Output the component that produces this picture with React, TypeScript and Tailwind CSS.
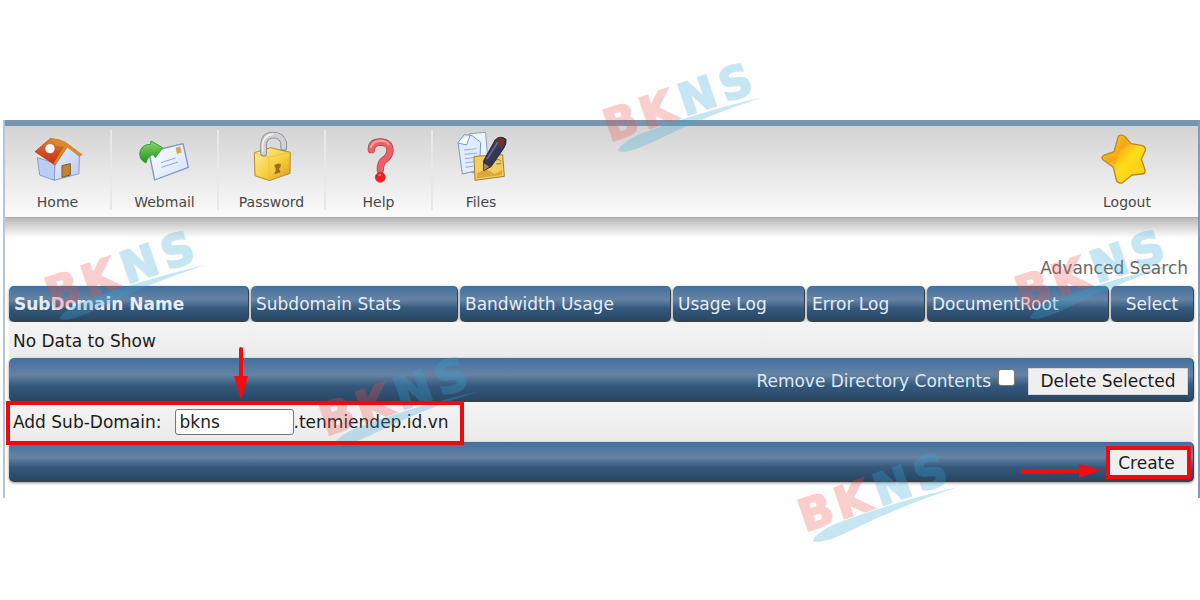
import type { FormEvent, ReactNode } from 'react';

function HomeIcon() {
  return (
    <svg viewBox="99 45 156 168" className="h-14 w-[52px] overflow-visible" aria-hidden="true">
      <defs>
        <linearGradient id="roof" x1="0" y1="0" x2="0" y2="1">
          <stop offset="0" stopColor="#e08a28" />
          <stop offset="0.5" stopColor="#d4501c" />
          <stop offset="1" stopColor="#c43016" />
        </linearGradient>
        <linearGradient id="wall" x1="0" y1="0" x2="1" y2="1">
          <stop offset="0" stopColor="#e8f0ff" />
          <stop offset="1" stopColor="#b8ccf4" />
        </linearGradient>
      </defs>
      <path d="M115 128 L122 180 L166 196 L168 145Z" fill="#b9cdf5" stroke="#8c9dc4" strokeWidth="3" />
      <path d="M166 196 L168 143 L204 90 L241 122 L240 176Z" fill="url(#wall)" stroke="#8c9dc4" strokeWidth="3" />
      <path d="M155 70 L108 110 L168 150 L205 94Z" fill="url(#roof)" stroke="#a43a1a" strokeWidth="2" />
      <path d="M155 70 Q180 72 200 82 L250 119 L241 124 L205 97 L168 150 L164 145 L196 92Z" fill="#d98a31" stroke="#a8672c" strokeWidth="1" />
      <path d="M155 70 Q180 72 200 82 L205 96 L170 92Z" fill="#d98a31" />
      <circle cx="153" cy="101" r="14" fill="#f4f7ff" />
      <path d="M189 152 L214 146 V180 L189 187Z" fill="#c08338" stroke="#85561f" strokeWidth="3" />
    </svg>
  );
}

function WebmailIcon() {
  return (
    <svg viewBox="417 45 156 168" className="h-14 w-[52px] overflow-visible" aria-hidden="true">
      <defs>
        <linearGradient id="paper" x1="0" y1="0" x2="1" y2="1">
          <stop offset="0" stopColor="#ffffff" />
          <stop offset="1" stopColor="#d2e1fa" />
        </linearGradient>
        <linearGradient id="arrow" x1="0" y1="0" x2="0" y2="1">
          <stop offset="0" stopColor="#8ada6a" />
          <stop offset="1" stopColor="#23901f" />
        </linearGradient>
      </defs>
      <path d="M447 111 L549 86 L565 157 L464 195Z" fill="url(#paper)" stroke="#7f95c4" strokeWidth="4" strokeLinejoin="round" />
      <path d="M527 98 L541 94 L545 113 L531 117Z" fill="#d8a65a" />
      <path d="M483 143 L527 129 M484 157 L534 141" stroke="#88a7dd" strokeWidth="3" />
      <path
        d="M453 78 L488 98 L466 128 L461 119 Q444 119 438 144 Q413 132 421 106 Q431 87 452 88Z"
        fill="url(#arrow)"
        stroke="#3a9c37"
        strokeWidth="3"
        strokeLinejoin="round"
      />
    </svg>
  );
}

function PasswordIcon() {
  return (
    <svg viewBox="90 45 156 168" className="h-14 w-[52px] overflow-visible" aria-hidden="true">
      <defs>
        <linearGradient id="brass" x1="0" y1="0" x2="1" y2="1">
          <stop offset="0" stopColor="#fff09a" />
          <stop offset="0.55" stopColor="#f6d040" />
          <stop offset="1" stopColor="#d99b24" />
        </linearGradient>
      </defs>
      <path d="M115 113 L163 98 L223 112 L222 175 L160 197 L117 182Z" fill="url(#brass)" stroke="#b58a2e" strokeWidth="3" strokeLinejoin="round" />
      <path d="M115 113 L159 127 L223 112 M159 127 L160 197" fill="none" stroke="#e6b93a" strokeWidth="2" />
      <path d="M143 115 V88 Q145 61 171 60 Q196 60 203 83 V98" fill="none" stroke="#84878c" strokeWidth="20" strokeLinecap="round" />
      <path d="M143 114 V88 Q145 61 171 60 Q196 60 203 83 V97" fill="none" stroke="#cfd1d4" strokeWidth="15" strokeLinecap="round" />
      <path d="M140 110 V88 Q143 62 171 57" fill="none" stroke="#f5f5f5" strokeWidth="4" />
      <path d="M175 151 Q185 142 194 147 V156 L189 161 L194 172 L175 178 L180 164Z" fill="#a2681e" />
    </svg>
  );
}

function HelpIcon() {
  return (
    <svg viewBox="411 45 156 168" className="h-14 w-[52px] overflow-visible" aria-hidden="true">
      <path d="M466 104 Q466 81 494 81 Q523 82 522 108 Q520 126 503 136 Q493 144 493 164" fill="none" stroke="#a94750" strokeWidth="22" strokeLinecap="round" />
      <path d="M466 104 Q466 81 494 81 Q523 82 522 108 Q520 126 503 136 Q493 144 493 164" fill="none" stroke="#ed6067" strokeWidth="18" strokeLinecap="round" />
      <path d="M464 97 Q470 78 494 77 Q510 77 518 88" fill="none" stroke="#f7a0a2" strokeWidth="6" strokeLinecap="round" />
      <circle cx="493" cy="187" r="15" fill="#f21c23" stroke="#ad3038" strokeWidth="2" />
      <circle cx="491" cy="180" r="4" fill="#fb7377" />
    </svg>
  );
}

function FilesIcon() {
  return (
    <svg viewBox="720 45 156 168" className="h-14 w-[52px] overflow-visible" aria-hidden="true">
      <path d="M764 56 L812 52 L820 160 L771 174Z" fill="#eef5ff" stroke="#86a3cd" strokeWidth="3" />
      <path d="M729 82 L748 59 L771 62 L797 82 L793 165 L742 177Z" fill="#e1edff" stroke="#7798c8" strokeWidth="3" />
      <path d="M729 84 L755 90 L766 59" fill="#ffffff" stroke="#7898c9" strokeWidth="3" />
      <path d="M747 105 L785 101 M749 118 L786 114 M750 131 L782 127 M751 144 L778 140 M752 157 L776 153" stroke="#8dafdf" strokeWidth="3" />
      <path d="M777 124 L863 119 L868 184 L780 196Z" fill="#f4ce62" stroke="#a87c30" strokeWidth="3" />
      <path d="M786 175 L813 162 L839 177 L861 165 V180 L785 190Z" fill="#dba939" />
      <path d="M838 139 Q847 128 858 138 M844 147 L859 145" fill="none" stroke="#8b9e42" strokeWidth="4" />
      <path d="M841 74 Q857 60 873 73 Q875 87 866 100 L828 155 L806 167 L806 137Z" fill="#343653" stroke="#242640" strokeWidth="3" />
      <path d="M846 72 Q860 65 870 76 L861 98 L837 86Z" fill="#6b3430" />
      <path d="M848 82 L816 132" stroke="#686c91" strokeWidth="5" />
      <path d="M807 145 L823 155 L806 167Z" fill="#ad854c" />
    </svg>
  );
}

function StarIcon() {
  return (
    <svg viewBox="363 60 156 168" className="h-14 w-[52px] overflow-visible" aria-hidden="true">
      <defs>
        <linearGradient id="gold" x1="0" y1="0" x2="1" y2="1">
          <stop offset="0" stopColor="#ffd11f" />
          <stop offset="0.35" stopColor="#f8ad17" />
          <stop offset="0.55" stopColor="#ffdc18" />
          <stop offset="1" stopColor="#fbc915" />
        </linearGradient>
      </defs>
      <path
        d="M415 79 Q424 71 435 80 L453 101 L488 107 Q499 111 495 124 L484 147 L495 180 Q497 192 486 192 L456 195 L429 217 Q418 223 410 213 L400 172 L371 151 Q361 143 371 136 L402 125Z"
        fill="url(#gold)"
        stroke="#bb8529"
        strokeWidth="4"
        strokeLinejoin="round"
      />
      <path d="M425 82 L412 127 L449 104Z" fill="#f6a51c" opacity="0.65" />
      <path d="M374 144 L414 139 L405 165Z" fill="#f39a17" opacity="0.45" />
    </svg>
  );
}

function NavItem({ label, children }: { label: string; children: ReactNode }) {
  return (
    <a href="#" className="flex flex-col items-center gap-2 text-sm leading-4 text-[#484848]">
      {children}
      <span>{label}</span>
    </a>
  );
}

const separated = 'w-[107px] border-r-2 border-[#e8e8e8]';

const navItems = [
  { label: 'Home', icon: <HomeIcon />, cell: separated },
  { label: 'Webmail', icon: <WebmailIcon />, cell: separated },
  { label: 'Password', icon: <PasswordIcon />, cell: separated },
  { label: 'Help', icon: <HelpIcon />, cell: separated },
  { label: 'Files', icon: <FilesIcon />, cell: 'w-24' },
];

const columns = [
  { label: 'SubDomain Name', width: 'w-[240px]', style: 'font-bold text-left' },
  { label: 'Subdomain Stats', width: 'w-[207px]', style: 'font-normal text-left' },
  { label: 'Bandwidth Usage', width: 'w-[211px]', style: 'font-normal text-left' },
  { label: 'Usage Log', width: 'w-[132px]', style: 'font-normal text-left' },
  { label: 'Error Log', width: 'w-[118px]', style: 'font-normal text-left' },
  { label: 'DocumentRoot', width: 'w-[182px]', style: 'font-normal text-left' },
  { label: 'Select', width: 'w-[83px]', style: 'font-normal text-center' },
];

const bar =
  'rounded-[5px] border-b-2 border-r border-b-[#36424e] border-r-[#36424e] bg-[linear-gradient(to_bottom,#40709f_0%,#6683a3_40%,#35597c_66%,#294765_100%)] shadow-[0_1px_3px_rgba(0,0,0,0.45)]';

const watermarks = [
  'left-[595px] top-[60px]',
  'left-[37px] top-[228px]',
  'left-[1007px] top-[227px]',
  'left-[311px] top-[354px]',
  'left-[790px] top-[450px]',
];

function Watermark({ place }: { place: string }) {
  return (
    <svg viewBox="0 0 180 100" className={`pointer-events-none absolute h-[100px] w-[180px] overflow-visible ${place}`} aria-hidden="true">
      <g opacity="0.28">
        <g transform="translate(15 82) rotate(-19)" fontFamily="DejaVu Sans, sans-serif" fontWeight="700" fontSize="44" strokeWidth="2">
          <text fill="#f0524f" stroke="#f0524f">
            B
          </text>
          <text x="38" fill="#f0524f" stroke="#f0524f">
            K
          </text>
          <text x="79" fill="#38a8d8" stroke="#38a8d8">
            N
          </text>
          <text x="122" fill="#38a8d8" stroke="#38a8d8">
            S
          </text>
        </g>
        <path d="M23 91 Q24 84 45 74 Q100 53 168 37 Q110 56 62 80 Q31 95 23 91Z" fill="#38a8d8" />
      </g>
    </svg>
  );
}

export default function App() {
  const submit = (event: FormEvent) => event.preventDefault();

  return (
    <div className="relative overflow-hidden bg-white py-[120px] font-['DejaVu_Sans',Verdana,sans-serif] text-[17px] leading-6 text-[#1c1c1c]">
      <main className="ml-[3px] border-l-2 border-r-2 border-l-[#b5c6d2] border-r-[#7f9db8] pb-4">
        <header className="flex h-[98px] items-start justify-between border-b border-t-[6px] border-b-[#aaaaaa] border-t-[#7796ae] bg-linear-to-b from-[#d3d3d3] to-[#fbfbfb] pr-[45px] pt-1">
          <nav className="flex">
            {navItems.map((item) => (
              <div key={item.label} className={`flex justify-center ${item.cell}`}>
                <NavItem label={item.label}>{item.icon}</NavItem>
              </div>
            ))}
          </nav>
          <NavItem label="Logout">
            <StarIcon />
          </NavItem>
        </header>
        <div className="h-5 bg-linear-to-b from-[#b9b9b9] to-white" />

        <div className="flex justify-end px-[10px] pb-[6px] pt-[18px]">
          <a href="#" className="text-[#686868]">
            Advanced Search
          </a>
        </div>

        <form onSubmit={submit} className="pl-[2px] pr-[3px]">
          <table className="w-full table-fixed border-separate border-spacing-x-[2px] border-spacing-y-0">
            <colgroup>
              {columns.map((column) => (
                <col key={column.label} className={column.width} />
              ))}
            </colgroup>
            <thead>
              <tr>
                {columns.map((column) => (
                  <th key={column.label} scope="col" className={`h-9 whitespace-nowrap px-[5px] pb-0 pt-px text-[#e4edf7] ${column.style} ${bar}`}>
                    {column.label}
                  </th>
                ))}
              </tr>
            </thead>
            <tbody>
              <tr>
                <td colSpan={7} className="h-9 bg-linear-to-b from-[#f4f4f5] to-[#ebebeb] px-1 pb-0 pt-px">
                  No Data to Show
                </td>
              </tr>
              <tr>
                <td colSpan={7} className={`h-11 pb-0 pl-1 pr-[5px] pt-1 ${bar}`}>
                  <div className="flex items-center justify-end">
                    <label htmlFor="remove" className="text-[#dce9f6]">
                      Remove Directory Contents
                    </label>
                    <input
                      id="remove"
                      type="checkbox"
                      className="mb-2 ml-[7px] mr-[13px] size-[17px] appearance-none rounded-[3px] border border-[#777777] bg-white checked:bg-[#1a73e8]"
                    />
                    <button type="button" className="h-[27px] w-40 whitespace-nowrap border border-[#d5d5d5] bg-[#efefef] leading-6 text-[#1c1c1c]">
                      Delete Selected
                    </button>
                  </div>
                </td>
              </tr>
              <tr>
                <td colSpan={7} className="h-10 bg-linear-to-b from-[#f4f4f5] to-[#ebebeb] px-1 py-0">
                  <div className="relative inline-flex items-center">
                    <label htmlFor="subdomain">Add Sub-Domain:</label>
                    <input
                      id="subdomain"
                      type="text"
                      defaultValue="bkns"
                      className="ml-[13px] h-[26px] w-[119px] rounded-[3px] border border-[#777777] bg-white px-1"
                    />
                    <span>.tenmiendep.id.vn</span>
                    <span className="pointer-events-none absolute -bottom-[10px] -left-[7px] -right-[15px] -top-2 z-10 border-4 border-[#ee0a10]" />
                    <svg viewBox="0 0 16 56" className="pointer-events-none absolute -top-[63px] left-[220px] z-10 h-14 w-4" aria-hidden="true">
                      <path d="M8 3 V32" stroke="#f50a10" strokeWidth="4" strokeLinecap="round" />
                      <path d="M1 30 L15 30 L8 54Z" fill="#f50a10" />
                    </svg>
                  </div>
                </td>
              </tr>
              <tr>
                <td colSpan={7} className={`h-10 pb-0 pl-1 pr-[5px] pt-[3px] ${bar}`}>
                  <div className="flex justify-end">
                    <div className="relative">
                      <button type="submit" className="block h-[27px] w-[79px] bg-[#efefef] pr-1 leading-6 text-[#1c1c1c]">
                        Create
                      </button>
                      <span className="pointer-events-none absolute -inset-x-[3px] -inset-y-[3px] border-4 border-[#ee0a10]" />
                      <svg viewBox="0 0 84 16" className="pointer-events-none absolute -left-[90px] top-[14px] h-4 w-[84px]" aria-hidden="true">
                        <path d="M4 9 L62 8" stroke="#f50a10" strokeWidth="4" strokeLinecap="round" />
                        <path d="M60 1 L82 7 L60 15Z" fill="#f50a10" />
                      </svg>
                    </div>
                  </div>
                </td>
              </tr>
            </tbody>
          </table>
        </form>
      </main>
      {watermarks.map((place) => (
        <Watermark key={place} place={place} />
      ))}
    </div>
  );
}
